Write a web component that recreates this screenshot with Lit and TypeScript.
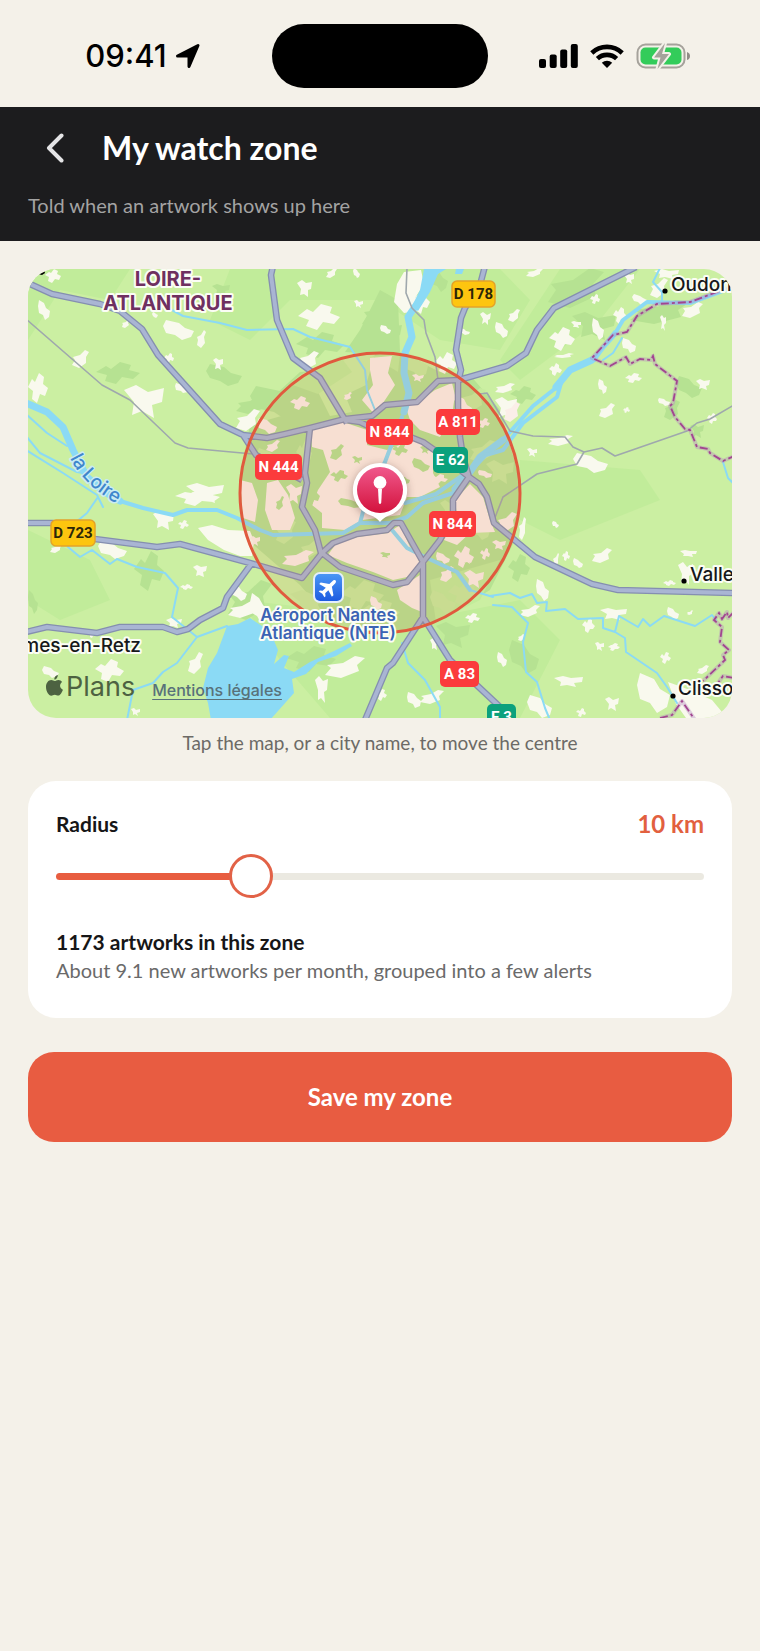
import { LitElement, html, svg, css } from "lit";
import { customElement, state } from "lit/decorators.js";

type Box = [number, number, number, number];

/* Jagged outlines on a unit square, scaled to each patch's box. */
const OUTLINES: number[][][] = [
  [[0, 0.45], [0.22, 0.2], [0.35, 0.3], [0.55, 0], [0.8, 0.12], [0.75, 0.35], [1, 0.5], [0.85, 0.75], [0.6, 0.7], [0.45, 1], [0.2, 0.85], [0.25, 0.6]],
  [[0.1, 0], [0.5, 0.15], [0.7, 0.4], [1, 0.55], [0.9, 0.85], [0.6, 1], [0.4, 0.75], [0.1, 0.65], [0, 0.3]],
  [[0.75, 0], [1, 0.1], [0.8, 0.4], [0.85, 0.7], [0.4, 1], [0, 0.85], [0.15, 0.55], [0.05, 0.4], [0.45, 0.3]],
  [[0, 0.15], [0.3, 0], [0.6, 0.2], [1, 0.1], [0.95, 0.5], [0.7, 0.6], [0.75, 1], [0.45, 0.8], [0.2, 0.9], [0.25, 0.5]],
];

const patch = ([x, y, w, h]: Box, i: number) =>
  "M" + OUTLINES[i % 4].map(([u, v]) => `${Math.round(x + u * w)} ${Math.round(y + v * h)}`).join("L") + "Z";
const patches = (boxes: Box[]) => boxes.map(patch).join("");

const FIELDS: Box[] = [
  [45, 269, 16, 14], [38, 300, 12, 20], [72, 350, 17, 18], [124, 385, 40, 33], [28, 373, 20, 30], [163, 320, 31, 20],
  [197, 330, 9, 18], [213, 358, 10, 12], [164, 353, 10, 10], [175, 383, 14, 10], [236, 409, 24, 22], [186, 483, 38, 20],
  [175, 488, 45, 18], [152, 312, 6, 6], [122, 319, 8, 9], [297, 280, 15, 17], [298, 304, 42, 26], [353, 268, 7, 10],
  [326, 268, 11, 10], [354, 300, 9, 8], [413, 290, 17, 24], [380, 325, 11, 9], [299, 351, 20, 18], [480, 312, 11, 13],
  [435, 352, 22, 22], [457, 328, 13, 7], [526, 268, 17, 9], [624, 273, 10, 11], [590, 294, 10, 10], [632, 294, 15, 11],
  [650, 278, 18, 20], [654, 269, 25, 10], [613, 307, 14, 17], [592, 318, 12, 22], [682, 302, 21, 16], [660, 315, 6, 16],
  [549, 327, 26, 24], [495, 322, 13, 16], [508, 309, 12, 13], [571, 321, 10, 7], [549, 363, 13, 13], [622, 338, 14, 15],
  [495, 383, 20, 10], [495, 397, 22, 22], [625, 373, 17, 10], [598, 379, 9, 15], [599, 403, 16, 15], [696, 379, 14, 11],
  [707, 413, 10, 11], [573, 453, 35, 20], [548, 435, 25, 11], [527, 448, 10, 9], [623, 407, 7, 6], [658, 398, 12, 8],
  [554, 353, 20, 5], [153, 511, 21, 19], [178, 520, 11, 9], [98, 541, 29, 18], [50, 544, 12, 9], [193, 565, 14, 12],
  [180, 584, 13, 6], [231, 585, 16, 16], [228, 601, 30, 17], [166, 618, 16, 10], [95, 659, 29, 23], [42, 666, 17, 12],
  [188, 652, 15, 22], [131, 708, 9, 8], [88, 631, 9, 7], [250, 593, 18, 30], [325, 656, 40, 22], [315, 676, 13, 27],
  [376, 689, 11, 12], [407, 692, 14, 16], [420, 690, 24, 14], [430, 638, 9, 12], [465, 613, 15, 10], [552, 521, 7, 7],
  [592, 548, 20, 15], [680, 550, 17, 7], [562, 551, 8, 10], [573, 558, 10, 10], [553, 553, 6, 14], [678, 562, 15, 23],
  [663, 580, 13, 6], [536, 579, 13, 22], [520, 605, 20, 12], [600, 608, 27, 12], [582, 618, 13, 15], [667, 607, 12, 13],
  [687, 610, 6, 5], [595, 642, 9, 9], [608, 643, 12, 8], [497, 652, 10, 15], [518, 634, 7, 7], [554, 676, 29, 11],
  [660, 652, 11, 12], [637, 673, 33, 40], [697, 665, 12, 9], [605, 697, 14, 14], [576, 708, 10, 9], [527, 695, 25, 23],
  [519, 517, 7, 23],
];

const WOODS: Box[] = [
  [96, 362, 44, 22], [206, 364, 36, 22], [236, 396, 30, 18], [212, 284, 18, 12], [134, 551, 30, 40], [28, 590, 10, 24],
  [548, 268, 56, 40], [572, 312, 44, 28], [510, 386, 26, 18], [676, 376, 26, 22], [630, 300, 60, 24], [690, 424, 14, 14],
  [508, 554, 22, 28], [509, 640, 30, 34], [362, 302, 36, 26], [368, 322, 34, 26], [296, 332, 48, 26], [430, 268, 18, 24],
  [228, 580, 44, 40], [436, 622, 34, 26], [286, 646, 50, 26], [250, 386, 60, 34], [664, 400, 16, 20],
];

/* Lighter meadow inside the wooded ring round the town. */
const MEADOWS: Box[] = [
  [296, 440, 16, 26], [256, 448, 28, 26], [300, 540, 20, 18], [290, 590, 40, 24], [340, 580, 44, 30], [404, 352, 24, 26],
  [470, 440, 26, 22], [486, 460, 28, 24], [448, 580, 34, 26], [430, 590, 26, 24], [276, 520, 20, 24], [440, 500, 18, 20],
  [360, 600, 40, 24], [470, 520, 20, 20], [460, 388, 26, 24],
];

const TOWN_SPOTS: Box[] = [
  [290, 396, 20, 14], [257, 418, 20, 16], [344, 392, 8, 8], [412, 374, 12, 8], [318, 426, 16, 16], [370, 596, 12, 14],
  [282, 550, 32, 16], [462, 556, 10, 8], [454, 546, 20, 22], [436, 552, 14, 12], [440, 566, 14, 16], [464, 570, 20, 18],
  [478, 418, 12, 10], [478, 470, 14, 8], [497, 512, 20, 20], [492, 540, 14, 10], [480, 548, 10, 12], [456, 396, 16, 22],
  [504, 402, 16, 20], [250, 536, 10, 10], [430, 474, 18, 10], [446, 388, 10, 14], [266, 440, 14, 12], [286, 484, 16, 20],
];

const TOWN_PARKS: Box[] = [
  [330, 470, 18, 12], [338, 498, 26, 10], [366, 492, 8, 12], [352, 456, 10, 8], [392, 444, 16, 12], [412, 458, 18, 14],
  [330, 444, 14, 16], [380, 552, 10, 6], [306, 486, 14, 20], [400, 476, 10, 8],
  [276, 496, 8, 14], [420, 446, 10, 8],
];

const MOTORWAYS =
  "M28 283L52 294L100 304L120 311L142 329L158 355L220 424L243 435L267 438L285 434L310 428L345 419L372 416L385 405L417 402L438 381L459 380L490 371L507 366L526 353L537 330L554 308L636 267" +
  "M273 266L271 275L277 320L293 358L320 378L347 423" +
  "M485 266L480 285L465 308L461 318L456 350L461 370L458 382L458 407L460 437L463 457L469 477" +
  "M346 420L360 422L372 428L413 438L423 442L440 454L469 477" +
  "M310 428L305 473L307 483L302 507L315 530L321 553" +
  "M243 435L256 455L302 480" +
  "M28 523L53 523L95 539L157 547L180 544L250 563L302 578L322 553L333 543L357 534L387 530L394 523L401 523L423 562L407 582L393 585L340 567L322 553" +
  "M469 477L453 500L453 515L440 540L423 562L423 617L393 663L387 668L365 720" +
  "M423 617L450 660L500 707L512 720" +
  "M469 477L479 484L487 497L494 523L535 557L592 584L618 590L734 593" +
  "M252 563L227 597L223 608L200 620L188 629L177 632L163 627L120 627L97 633L47 627L26 632";

const LANES =
  "M26 319L102 385L130 400L175 443L188 448L253 454M407 268L406 293L412 308L424 320L426 333L435 357L438 380" +
  "M480 394L487 393L510 431L533 436L565 437L573 447L584 452L602 448L615 456L687 431L697 423L710 419L734 405" +
  "M584 452L577 464L537 474L503 497L494 520";

const STREAMS =
  "M170 309L183 316L220 323L247 330L293 329L310 337L350 347L365 370L367 390L375 410" +
  "M26 414L47 433L67 446M26 436L40 453L77 472L88 474M26 450L63 473L97 495L103 507" +
  "M98 497L87 513L70 527L68 547L80 557L92 550L110 564L117 559L137 567L165 573L178 588L172 617L197 637L227 626" +
  "M197 637L177 663L163 672L153 683L133 690L127 720" +
  "M490 596L510 593L520 598L532 594L537 603L547 602L546 611L565 609L578 619L603 618L603 628L615 632L619 616L638 627L643 619L650 626L664 616L695 626L712 615L716 620" +
  "M615 632L625 638L626 652L657 673L667 687L677 703M493 605L512 607L528 623L523 642L526 672L537 682L545 708L550 720" +
  "M402 643L408 663L425 680L440 707L440 720M660 268L653 282L662 292L662 302M622 338L613 353L603 360M723 462L728 478L734 484" +
  "M470 590L493 597";

const BORDER =
  "M734 286L717 292L690 302L657 304L637 316L627 332L613 335L592 358L610 366L626 357L630 364L640 359L651 360L653 356L655 364L677 381L673 403L670 406L675 417L685 429L690 430L697 447L708 449L710 453L723 461L734 456" +
  "M734 612L728 618L727 612L722 619L719 613L714 620L722 627L720 642L729 650L723 655L725 660L703 681M734 678L723 676L713 690M660 718L672 715L682 701L695 720";

type Shield = { x: number; y: number; w: number; label: string; kind: "red" | "green" | "yellow" };
const SHIELDS: Shield[] = [
  { x: 452, y: 281, w: 43, label: "D 178", kind: "yellow" },
  { x: 51, y: 520, w: 44, label: "D 723", kind: "yellow" },
  { x: 366, y: 419, w: 47, label: "N 844", kind: "red" },
  { x: 436, y: 409, w: 44, label: "A 811", kind: "red" },
  { x: 255, y: 454, w: 47, label: "N 444", kind: "red" },
  { x: 429, y: 511, w: 47, label: "N 844", kind: "red" },
  { x: 440, y: 661, w: 39, label: "A 83", kind: "red" },
  { x: 433, y: 447, w: 35, label: "E 62", kind: "green" },
  { x: 487, y: 704, w: 29, label: "E 3", kind: "green" },
];

@customElement("zone-map")
export class ZoneMap extends LitElement {
  static properties = { radius: { type: Number } };
  declare radius: number;

  static styles = css`
    :host { display: block; position: relative; overflow: hidden; border-radius: 28px; background: #cbefa2; }
    .canvas { display: block; width: 100%; height: auto; font-family: Inter, "Liberation Sans", sans-serif; }
    .wood { fill: #b6e292; }
    .lush { fill: #c1ec9a; }
    .meadow { fill: #c6eb9e; }
    .field { fill: #f9f9ee; }
    .town { fill: #fbeee8; }
    .lake { fill: #8bdaf5; }
    .water { fill: none; stroke: #8bdaf5; stroke-linejoin: round; stroke-linecap: round; }
    .w2 { stroke-width: 2; }
    .w4 { stroke-width: 4; }
    .w7 { stroke-width: 7; }
    .lane { fill: none; stroke: #9fa8ad; stroke-width: 1.6; stroke-linejoin: round; }
    .casing { fill: none; stroke: #858fb0; stroke-width: 6.6; stroke-linejoin: round; }
    .road { fill: none; stroke: #a9b5d3; stroke-width: 4; stroke-linejoin: round; }
    .glow { fill: none; stroke: #b58ac0; stroke-width: 4; opacity: 0.4; stroke-linejoin: round; }
    .border { fill: none; stroke: #a2458f; stroke-width: 1.8; stroke-dasharray: 8 3 3 3; }
    .zone { fill: #e0703c; fill-opacity: 0.12; stroke: #e05a3e; stroke-width: 3; }
    .halo { paint-order: stroke; stroke: #fbfdf5; stroke-width: 4px; stroke-linejoin: round; }
    .region { font-size: 20px; font-weight: 700; fill: #6f3060; text-anchor: middle; }
    .city { font-size: 19px; font-weight: 500; fill: #16181a; }
    .river { font-size: 19px; font-weight: 500; fill: #3f86cc; stroke: #c9ecf3; stroke-width: 3px; }
    .airport { font-size: 17px; font-weight: 600; fill: #3a63b4; text-anchor: middle; }
    .shield { font-family: Roboto, "Liberation Sans", sans-serif; font-size: 15px; font-weight: 700; text-anchor: middle; fill: #fff; }
    .shield.yellow { fill: #2c2608; }
    .plate.red { fill: #fb3b3c; }
    .plate.green { fill: #0ba17d; }
    .plate.yellow { fill: #fdc50f; stroke: #e3a32a; stroke-width: 1.5; }
    .pin-shadow { filter: drop-shadow(0 2px 4px rgba(60, 20, 20, 0.35)); }
    .legal { position: absolute; left: 18px; bottom: 12px; display: flex; align-items: baseline; color: #4d6241; font: 400 27px/32px Inter, "Liberation Sans", sans-serif; }
    .legal svg { width: 17px; height: 21px; margin-right: 3px; }
    .legal a { margin-left: 17px; font-size: 16px; font-weight: 500; color: #58717a; text-underline-offset: 3px; }
  `;

  constructor() {
    super();
    this.radius = 10;
  }

  render() {
    return html`
      <svg class="canvas" viewBox="28 269 704 449" role="img" aria-label="Map of the watch zone around Nantes">
        <defs>
          <linearGradient id="pin" x2="0" y2="1"><stop offset="0" stop-color="#f0588c" /><stop offset="1" stop-color="#d3123c" /></linearGradient>
          <linearGradient id="sky" x2="0" y2="1"><stop offset="0" stop-color="#4a97f5" /><stop offset="1" stop-color="#1d5be0" /></linearGradient>
          <path id="loire" d="M70 458C80 478 98 496 136 514" />
        </defs>
        <path class="lush" d="M28 269H130L110 300L60 290L28 340ZM230 269H500L530 300L500 350L440 340L380 300L290 300L250 340L210 320ZM560 269H640L600 320L560 350L520 380L500 360ZM28 530L90 560L110 600L60 620L28 600ZM240 600L420 620L520 600L560 640L520 718H330L280 660ZM520 460L640 470L660 500L560 540L520 520Z" />
        <path class="wood" d=${patches(WOODS)} />
        <path class="wood" d="M345 352L375 354L366 385L345 395L352 412L330 416L318 392L322 370L300 372L275 395L285 415L250 425L243 460L240 510L248 540L300 585L330 620L395 632L440 620L490 590L515 540L520 480L500 410L470 375L440 372L400 352L398 300L380 290L360 330Z" />
        <path class="lush" d="M262 408L300 375L340 356L352 372L318 394L290 384ZM430 580L500 560L480 600L436 622ZM372 356L400 354L398 372Z" />
        <path class="meadow" d=${patches(MEADOWS)} />
        <path class="field" d=${patches(FIELDS)} />
        <path class="field" d="M397 284L404 272L421 270L424 284L415 298L419 311L404 313L394 302ZM198 528L212 525L228 530L250 531L254 541L252 556L240 556L224 550L208 540ZM668 682L690 690L712 700L722 712L716 718H686L676 704Z" />
        <path class="town" d="M311 430L343 422L367 430L367 445L387 450L417 438L433 450L433 473L440 487L420 497L407 497L400 515L362 520L345 530L322 528L322 513L312 505L318 490L330 472L323 450L312 447ZM335 545L357 537L388 533L400 525L410 547L418 557L420 567L407 577L393 580L373 572L347 563L328 555ZM370 358L392 356L388 373L395 385L385 400L375 415L362 400L373 385L370 370ZM405 405L417 403L435 390L452 383L455 395L452 415L440 437L420 430L410 420ZM470 484L483 497L490 520L495 532L470 533L457 545L444 540L457 515L455 500ZM397 590L420 575L422 612L412 608L400 600ZM267 483L278 480L288 495L295 518L290 530L272 530L265 510ZM240 480L252 483L258 500L255 522L243 518Z" />
        <path class="town" d=${patches(TOWN_SPOTS)} />
        <path class="wood" d=${patches(TOWN_PARKS)} />

        <path class="lake" d="M227 626L238 624L250 618L262 626L272 636L278 650L274 664L284 655L289 656L284 668L294 672L310 662L334 651L350 643L352 646L336 656L318 662L306 674L292 679L294 693L286 702L270 720H211L208 703L203 688L208 668L217 653Z" />
        <path class="lake" d="M424 269H446L438 274L430 292L418 311L412 306L420 290ZM456 269H464L462 274H455Z" />
        <path class="water w2" d=${STREAMS} />
        <path class="water w7" d="M26 403L47 412L63 427L73 450L87 477L103 491L120 501" />
        <path class="water w4" d="M120 501L143 508L173 515L187 510L217 510L237 518L260 530L273 535L343 533L360 523L390 523L407 517L423 503L453 493M360 523L364 508L376 480L385 462L402 417M392 530L407 548L427 558L457 572L470 590M405 503L436 494L470 470" />
        <path class="water w7" d="M417 304L408 317L412 337L405 353L404 373L409 393L404 412M455 489L470 472L480 457L503 440M556 387L570 370L592 360" />
        <path class="water w4" d="M470 472L486 455L503 450L523 423L557 397L562 380M503 440L533 406L557 387M592 360L613 337L623 320L647 302L690 303L734 287M594 360L615 332" />

        <path class="lane" d=${LANES} />
        <path class="casing" d=${MOTORWAYS} />
        <path class="road" d=${MOTORWAYS} />
        <path class="glow" d=${BORDER} />
        <path class="border" d=${BORDER} />

        <circle class="zone" cx="380" cy="493" r=${this.radius * 14} />

        ${SHIELDS.map((s) => svg`
          <rect class="plate ${s.kind}" x=${s.x} y=${s.y} width=${s.w} height="26" rx="5" />
          <text class="shield ${s.kind}" x=${s.x + s.w / 2} y=${s.y + 18}>${s.label}</text>`)}

        <text class="region halo" x="168" y="286">LOIRE-</text>
        <text class="region halo" x="168" y="310">ATLANTIQUE</text>
        <circle cx="665" cy="291" r="2.6" />
        <text class="city halo" x="671" y="291">Oudon</text>
        <circle cx="684" cy="581" r="2.6" />
        <text class="city halo" x="690" y="581">Valle</text>
        <circle cx="673" cy="696" r="2.6" />
        <text class="city halo" x="678" y="695">Clisso</text>
        <text class="city halo" x="141" y="652" text-anchor="end">mes-en-Retz</text>
        <text class="river halo"><textPath href="#loire">la Loire</textPath></text>
        <path d="M38 274L44 270L45 273L42 275Z" />

        <rect x="313" y="572" width="31" height="31" rx="7" fill="#e4eefb" />
        <rect x="315" y="574" width="27" height="27" rx="5" fill="url(#sky)" />
        <path fill="#fff" transform="translate(328.500 587.500) rotate(45)" d="M0-10C1.300-10 1.800-8.600 1.800-7.200V-3L9 2V4.200L1.800 2V6.500L4 8.200V9.800L0 8.700L-4 9.800V8.200L-1.800 6.500V2L-9 4.200V2L-1.800-3V-7.200C-1.800-8.600-1.300-10 0-10Z" />
        <text class="airport halo" x="328" y="621">Aéroport Nantes</text>
        <text class="airport halo" x="328" y="639">Atlantique (NTE)</text>

        <g class="pin-shadow"><path fill="#fff" d="M380 463A27 27 0 0 1 389 515.500Q384 517 380 522Q376 517 371 515.500A27 27 0 0 1 380 463Z" /></g>
        <circle cx="380" cy="490" r="23" fill="url(#pin)" />
        <circle cx="380" cy="482.500" r="6.400" fill="#fff" />
        <path d="M378 489H382L381.200 503Q380 505 378.800 503Z" fill="#fff" />
      </svg>
      <div class="legal">
        <svg viewBox="0 0 17 21" fill="currentColor" aria-hidden="true">
          <path d="M11.800 0C12 1.900 10.300 4.700 8.300 4.600C8 2.500 9.900.300 11.800 0ZM8.700 6.100C9.500 6.100 10.700 5 12.400 5C13.900 5.100 15.300 5.800 16.200 7.100C13 9.200 13.600 13.300 16.900 14.700C16.200 16.900 14.300 20.500 12.300 20.600C10.900 20.700 10.400 19.800 8.800 19.800C7.200 19.800 6.600 20.600 5.300 20.700C2.700 20.700 0 16.200 0 12C0 7.800 2.600 5.200 5.200 5.100C6.800 5.100 7.900 6.100 8.700 6.100Z" />
        </svg>
        <span>Plans</span>
        <a href="#legal">Mentions légales</a>
      </div>
    `;
  }
}

@customElement("app-root")
export class AppRoot extends LitElement {
  @state() private radius = 10;
  private readonly min = 2;
  private readonly max = 30;

  static styles = css`
    :host { display: block; min-height: 100vh; background: #f4f1e9; color: #161617; font-family: Lato, "Open Sans", sans-serif; font-size: 20px; line-height: 28px; }
    * { box-sizing: border-box; }
    h1, h2, p { margin: 0; }
    .status { display: grid; grid-template-columns: 1fr 216px 1fr; align-items: center; height: 107px; padding-bottom: 4px; padding-top: 8px; color: #000; }
    .clock { display: flex; align-items: center; justify-content: center; gap: 8px; padding-left: 14px; font: 500 31px/40px Inter, "Liberation Sans", sans-serif; }
    .island { height: 64px; border-radius: 32px; background: #000; }
    .signals { display: flex; align-items: center; justify-content: center; gap: 12px; padding-right: 18px; }
    svg { display: block; flex: none; }
    .top { padding: 20px 28px; height: 134px; background: #1c1c1e; color: #fff; display: flex; flex-direction: column; justify-content: space-between; }
    .bar { display: flex; align-items: center; gap: 38px; }
    .back { display: flex; margin: 0; padding: 0 0 0 18px; border: 0; background: none; color: #e4e4e6; cursor: pointer; }
    h1 { font-size: 32px; line-height: 42px; font-weight: 700; }
    .lead { color: #a3a3a3; line-height: 32px; }
    main { padding: 28px; display: flex; flex-direction: column; }
    .hint { margin-top: 11px; text-align: center; color: #6c6a66; font-size: 19px; }
    .card { margin-top: 24px; padding: 28px 28px 34px; border-radius: 28px; background: #fff; }
    .row { display: flex; justify-content: space-between; align-items: center; height: 30px; }
    label { font-weight: 700; font-size: 21px; }
    output { font-weight: 700; font-size: 24px; color: #e2603f; }
    .slider { display: block; width: 100%; height: 44px; margin: 15px 0 30px; appearance: none; background: none; cursor: pointer; }
    .slider::-webkit-slider-runnable-track { height: 7px; border-radius: 4px; background: linear-gradient(to right, #e85d40 var(--fill), #ebe9e1 var(--fill)); }
    .slider::-webkit-slider-thumb { appearance: none; width: 44px; height: 44px; margin-top: -19px; border: 3px solid #e26247; border-radius: 50%; background: #fff; }
    h2 { font-size: 21px; line-height: 28px; font-weight: 700; }
    .note { color: #6a6a6a; }
    .save { margin-top: 34px; height: 90px; border: 0; border-radius: 26px; background: #e85c41; color: #fff; font: 700 24px/30px Lato, "Open Sans", sans-serif; cursor: pointer; }
  `;

  private onSlide(e: Event) {
    this.radius = Number((e.target as HTMLInputElement).value);
  }

  render() {
    const fill = ((this.radius - this.min) / (this.max - this.min)) * 100;
    return html`
      <div class="status">
        <div class="clock">
          <span>09:41</span>
          <svg width="26" height="26" viewBox="0 0 26 26"><path d="M23 2.500L14 23.500V13H2.500Z" stroke="#000" stroke-width="3" stroke-linejoin="round" /></svg>
        </div>
        <div class="island"></div>
        <div class="signals">
          <svg width="39" height="24" viewBox="0 0 39 24"><rect y="15" width="7" height="9" rx="2" /><rect x="10.700" y="10.500" width="7" height="13.500" rx="2" /><rect x="21.200" y="5.500" width="7" height="18.500" rx="2" /><rect x="31.800" width="7" height="24" rx="2" /></svg>
          <svg width="34" height="24" viewBox="0 0 34 24" fill="none" stroke="#000" stroke-width="4.600"><path d="M1.800 9A22 22 0 0 1 32.200 9" /><path d="M7.400 14.700A14 14 0 0 1 26.600 14.700" /><path d="M17 24L11.800 18.700A8 8 0 0 1 22.200 18.700Z" fill="#000" stroke="none" /></svg>
          <svg width="56" height="28" viewBox="0 0 56 28">
            <rect x="1.500" y="2.500" width="47" height="23" rx="8" fill="none" stroke="#a5a29b" stroke-width="2" />
            <rect x="4.500" y="5.500" width="41" height="17" rx="5" fill="#33cc5a" />
            <path d="M51 10V18Q54 17 54 14T51 10Z" fill="#8f8c86" />
            <path d="M29 1L18 15.500H24.500L21.500 27L33 12H26Z" fill="#a5a29b" stroke="#f4f1e9" stroke-width="4" paint-order="stroke" stroke-linejoin="round" />
          </svg>
        </div>
      </div>
      <header class="top">
        <div class="bar">
          <button class="back" aria-label="Back">
            <svg width="18" height="30" viewBox="0 0 18 30" fill="none" stroke="currentColor" stroke-width="4" stroke-linecap="round" stroke-linejoin="round"><path d="M15.500 2.500L3 15L15.500 27.500" /></svg>
          </button>
          <h1>My watch zone</h1>
        </div>
        <p class="lead">Told when an artwork shows up here</p>
      </header>
      <main>
        <zone-map .radius=${this.radius}></zone-map>
        <p class="hint">Tap the map, or a city name, to move the centre</p>
        <section class="card">
          <div class="row">
            <label for="radius">Radius</label>
            <output for="radius">${this.radius} km</output>
          </div>
          <input class="slider" id="radius" type="range" min=${this.min} max=${this.max} .value=${String(this.radius)} style="--fill: ${fill}%" @input=${this.onSlide} />
          <h2>1173 artworks in this zone</h2>
          <p class="note">About 9.1 new artworks per month, grouped into a few alerts</p>
        </section>
        <button class="save">Save my zone</button>
      </main>
    `;
  }
}
